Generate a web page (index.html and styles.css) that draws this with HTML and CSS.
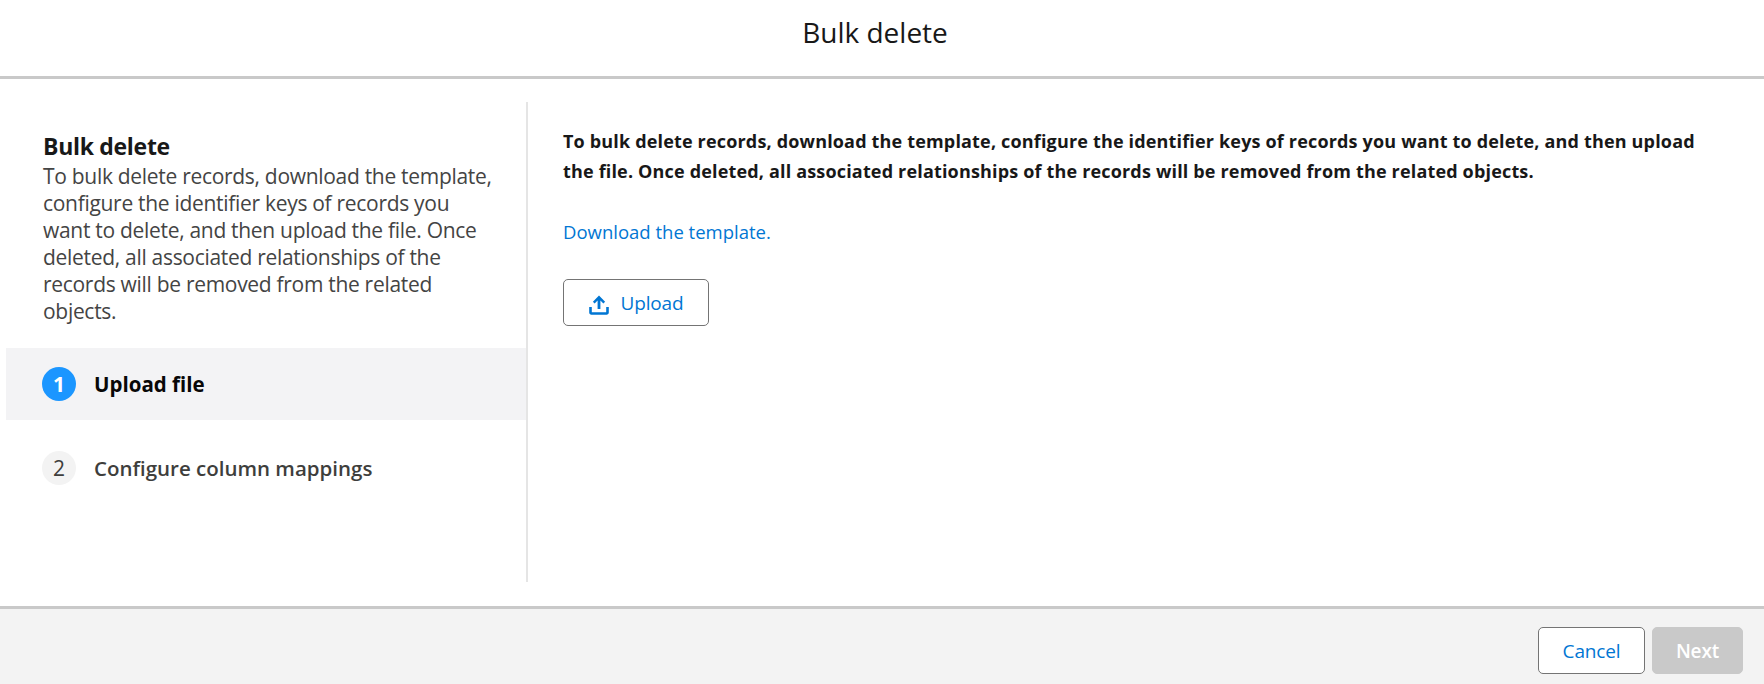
FILE: index.html
```html
<!DOCTYPE html>
<html lang="en">
<head>
<meta charset="utf-8">
<title>Bulk delete</title>
<link rel="stylesheet" href="styles.css">
</head>
<body>
<div class="page">
  <header class="top">Bulk delete</header>
  <main class="body">
    <aside class="side">
      <div class="intro">
        <h2 class="intro-title">Bulk delete</h2>
        <p class="intro-text">To bulk delete records, download the template, configure the identifier keys of records you want to delete, and then upload the file. Once deleted, all associated relationships of the records will be removed from the related objects.</p>
      </div>
      <div class="step step-active"><span class="num num-active">1</span><span class="label label-active">Upload file</span></div>
      <div class="step step-idle"><span class="num">2</span><span class="label">Configure column mappings</span></div>
    </aside>
    <section class="content">
      <p class="lead">To bulk delete records, download the template, configure the identifier keys of records you want to delete, and then upload the file. Once deleted, all associated relationships of the records will be removed from the related objects.</p>
      <a class="link" href="#">Download the template.</a>
      <button class="btn btn-upload" type="button">
        <svg class="icon" viewBox="0 0 20 20" width="20" height="20" aria-hidden="true"><path d="M10 .6 3.9 6.7l1.7 1.7 3-3v8.7h2.8V5.4l3 3 1.7-1.7z" fill="#0176d3"/><path d="M.2 12h2.6v5.2h14.4V12h2.6v5.6c0 1.3-1 2.2-2.2 2.2H2.4c-1.2 0-2.2-.9-2.2-2.2z" fill="#0176d3"/></svg>
        <span>Upload</span>
      </button>
    </section>
  </main>
  <footer class="bottom">
    <button class="btn btn-cancel" type="button">Cancel</button>
    <button class="btn btn-next" type="button" disabled>Next</button>
  </footer>
</div>
</body>
</html>
```
FILE: styles.css
```css
* { box-sizing: border-box; }
html, body { margin: 0; height: 100%; }
body {
  font-family: "Open Sans", "Noto Sans", "Liberation Sans", sans-serif;
  color: #181818;
  background: #fff;
}
.page { height: 684px; display: flex; flex-direction: column; overflow: hidden; }
.top {
  height: 79px;
  border-bottom: 3px solid #c9c9c9;
  padding-right: 14px;
  text-align: center;
  font-size: 28px;
  line-height: 64px;
  color: #181818;
}
.body { flex: 1; display: flex; padding: 23px 0 24px 6px; min-height: 0; }
.side { width: 522px; border-right: 2px solid #e5e5e5; flex: none; }
.intro { padding: 28px 30px 23px 37px; }
.intro-title { margin: 0; font-size: 23px; line-height: 33px; font-weight: 700; letter-spacing: -0.3px; }
.intro-text { margin: 0; font-size: 21px; line-height: 27px; color: #444; letter-spacing: -0.3px; }
.step { display: flex; align-items: center; padding-left: 36px; height: 72px; }
.step-active { background: #f3f3f5; }
.step-idle { height: 84px; padding-top: 12px; }
.num {
  width: 34px; height: 34px; border-radius: 50%;
  display: flex; align-items: center; justify-content: center;
  background: #f3f3f3; color: #3e3e3c; font-size: 21px; flex: none;
}
.num-active { background: #1b96ff; color: #fff; font-weight: 700; }
.label { margin-left: 18px; font-size: 20.5px; font-weight: 600; color: #3e3e3c; }
.label-active { color: #080707; font-weight: 700; }
.content { flex: 1; padding: 25px 50px 0 35px; min-width: 0; }
.lead { margin: 0; font-size: 18px; line-height: 29.5px; font-weight: 700; color: #181818; letter-spacing: 0.17px; }
.link { display: block; margin-top: 33px; font-size: 18.5px; line-height: 26px; color: #0176d3; text-decoration: none; }
.btn {
  font-family: inherit; font-size: 19px; border-radius: 5px; cursor: pointer;
  display: inline-flex; align-items: center; justify-content: center;
  height: 47px; background: #fff; color: #0176d3; border: 1px solid #747474; padding: 0;
  letter-spacing: -0.15px;
}
.btn-upload { margin-top: 34px; width: 146px; gap: 12px; }
.icon { flex: none; margin-top: 5px; }
.bottom {
  height: 78px; border-top: 3px solid #c9c9c9; background: #f3f3f3;
  display: flex; justify-content: flex-end; align-items: center; gap: 7px; padding: 8px 21px 0 0;
}
.btn-cancel { width: 107px; }
.btn-next { width: 91px; background: #c9c9c9; border-color: #c9c9c9; color: #fff; cursor: default; font-weight: 600; }
```
